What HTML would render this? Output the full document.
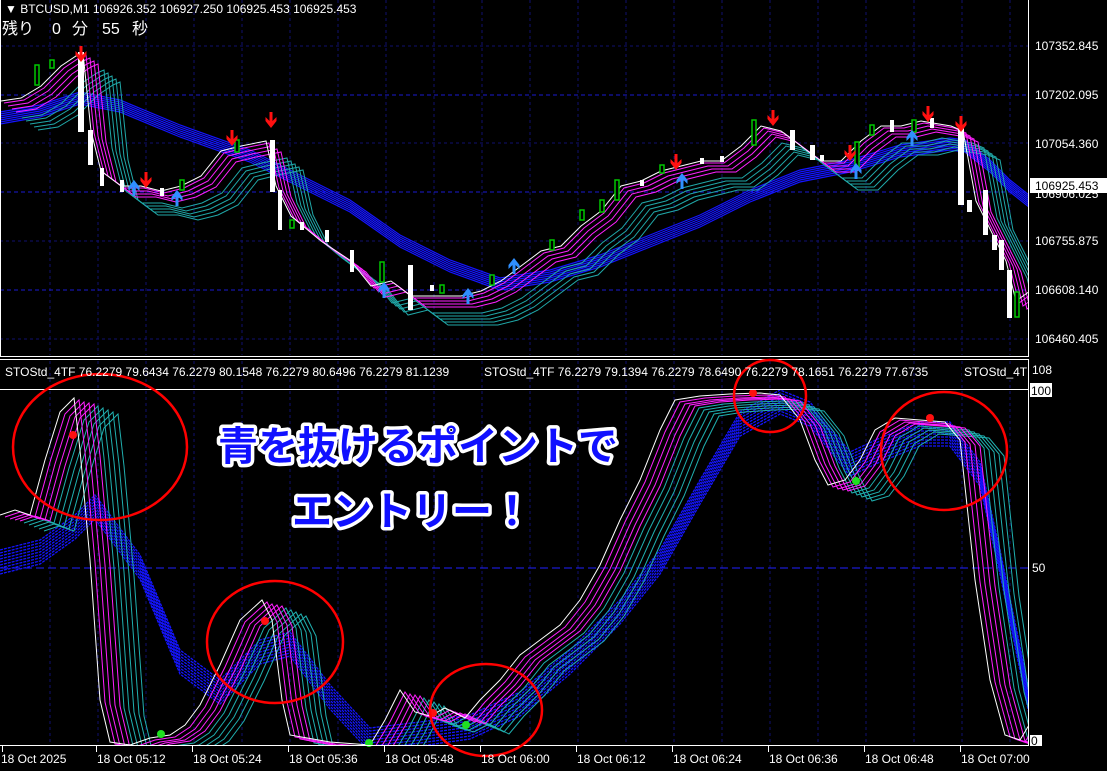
<!DOCTYPE html>
<html><head><meta charset="utf-8"><style>
html,body{margin:0;padding:0;background:#000;width:1107px;height:771px;overflow:hidden}
svg{display:block}
.t{font-family:"Liberation Sans",sans-serif;font-size:12px;fill:#fff}
.j{font-family:"Liberation Sans","Noto Sans CJK JP",sans-serif}
</style></head><body>
<svg width="1107" height="771" viewBox="0 0 1107 771" xmlns="http://www.w3.org/2000/svg">
<defs>
<path id="P" fill="none" d="M0,100 L20,97 L40,85 L60,65 L75,55 L82,52 L90,130 L100,170 L120,185 L140,185 L160,190 L180,185 L200,175 L220,150 L240,145 L265,140 L275,185 L290,215 L320,240 L350,260 L370,285 L390,280 L410,295 L430,295 L460,295 L480,290 L500,280 L520,265 L540,250 L560,245 L580,225 L600,210 L620,185 L640,180 L660,170 L680,165 L700,160 L720,160 L740,145 L760,125 L780,130 L800,145 L820,160 L840,160 L860,140 L880,125 L900,125 L920,120 L950,125 L962,130 L975,200 L990,230 L1005,260 L1015,300 L1029,290"/>
<path id="B" fill="none" d="M0,112 L40,105 L80,92 L120,100 L180,125 L250,150 L300,175 L350,200 L400,235 L450,260 L500,278 L550,270 L600,255 L650,235 L700,215 L750,190 L800,170 L850,160 L900,145 L950,138 L965,140 L990,160 L1010,180 L1029,195"/>
<path id="S" fill="none" d="M0,515 L15,510 L30,515 L45,460 L60,412 L74,398 L80,450 L90,560 L100,700 L110,742 L130,745 L150,738 L170,735 L185,725 L200,705 L220,665 L240,620 L262,600 L272,620 L282,700 L290,735 L330,742 L370,745 L385,720 L400,690 L415,712 L430,716 L445,708 L465,718 L480,700 L500,680 L520,655 L540,640 L560,625 L580,600 L600,565 L620,520 L640,480 L660,430 L675,400 L700,396 L730,394 L760,393 L780,395 L800,420 L815,460 L828,485 L845,480 L860,460 L875,430 L895,418 L920,420 L945,422 L960,440 L975,580 L990,680 L1005,735 L1020,740 L1029,725"/>
<path id="BL" fill="none" d="M0,550 L40,540 L75,515 L95,495 L140,555 L180,650 L220,680 L260,640 L290,632 L330,685 L370,728 L420,722 L470,715 L520,692 L570,650 L620,600 L660,550 L700,480 L740,412 L780,390 L810,402 L850,452 L880,438 L920,422 L950,422 L980,462 L1000,550 L1029,690"/>
<path id="AD" d="M-1.5,-8 h3 v9 l4,-4 v4 l-5.5,7 l-5.5,-7 v-4 l4,4 z" fill="#ff1010"/>
<path id="AU" d="M-1.5,8 h3 v-9 l4,4 v-4 l-5.5,-7 l-5.5,7 v4 l4,-4 z" fill="#2f8fff"/>
<clipPath id="c1"><rect x="0" y="0" width="1028" height="355"/></clipPath>
<clipPath id="c2"><rect x="0" y="390" width="1028" height="355"/></clipPath>
</defs>

<g stroke="#10106e" stroke-dasharray="3,3" stroke-width="1">
<path d="M50,0V355M98,0V355M146,0V355M194,0V355M242,0V355M290,0V355M338,0V355M386,0V355M434,0V355M482,0V355M530,0V355M578,0V355M626,0V355M674,0V355M722,0V355M770,0V355M818,0V355M866,0V355M914,0V355M962,0V355M1010,0V355"/>
<path d="M50,361V745M98,361V745M146,361V745M194,361V745M242,361V745M290,361V745M338,361V745M386,361V745M434,361V745M482,361V745M530,361V745M578,361V745M626,361V745M674,361V745M722,361V745M770,361V745M818,361V745M866,361V745M914,361V745M962,361V745M1010,361V745"/>
<path d="M0,46H1028M0,143H1028M0,241H1028M0,339H1028"/>
</g>
<g stroke="#1a1ad0" stroke-dasharray="4,3"><path d="M0,95H1028M0,192H1028M0,290H1028"/></g>
<path d="M0,568H1028" stroke="#2020ff" stroke-dasharray="8,4"/>

<g clip-path="url(#c1)">
<g stroke="#1414ff" stroke-width="1.2">
<use href="#B"/><use href="#B" transform="translate(0,2)"/><use href="#B" transform="translate(0,4)"/><use href="#B" transform="translate(0,6)"/><use href="#B" transform="translate(0,8)"/><use href="#B" transform="translate(0,10)"/><use href="#B" transform="translate(0,12)"/>
</g>
<g stroke="#20a8a8" stroke-width="1">
<use href="#P" transform="translate(22,18)"/><use href="#P" transform="translate(26,21)"/><use href="#P" transform="translate(30,24)"/><use href="#P" transform="translate(34,27)"/><use href="#P" transform="translate(38,30)"/>
</g>
<g stroke="#ff20ff" stroke-width="1">
<use href="#P" transform="translate(4,3)"/><use href="#P" transform="translate(8,6)"/><use href="#P" transform="translate(12,9)"/><use href="#P" transform="translate(16,12)"/>
</g>
<g stroke="#fff" stroke-width="1"><use href="#P" transform="translate(1,1)"/></g>
<g fill="#fff">
<rect x="78" y="52" width="6" height="80"/><rect x="88" y="130" width="5" height="35"/><rect x="270" y="140" width="5" height="52"/><rect x="278" y="190" width="4" height="40"/><rect x="408" y="265" width="5" height="45"/><rect x="325" y="230" width="4" height="12"/><rect x="350" y="250" width="4" height="22"/><rect x="790" y="130" width="5" height="20"/><rect x="810" y="145" width="5" height="15"/><rect x="958" y="125" width="6" height="80"/><rect x="967" y="200" width="5" height="12"/><rect x="983" y="190" width="5" height="45"/><rect x="992" y="235" width="5" height="15"/><rect x="999" y="240" width="5" height="30"/><rect x="1007" y="270" width="5" height="48"/>
<rect x="100" y="168" width="4" height="18"/><rect x="120" y="180" width="4" height="12"/><rect x="160" y="188" width="4" height="8"/><rect x="300" y="222" width="4" height="8"/><rect x="430" y="285" width="4" height="6"/><rect x="640" y="180" width="4" height="6"/><rect x="700" y="158" width="4" height="6"/><rect x="720" y="156" width="4" height="6"/><rect x="820" y="155" width="4" height="6"/><rect x="890" y="120" width="4" height="12"/><rect x="930" y="118" width="4" height="10"/>
</g>
<g fill="#000" stroke="#00c800" stroke-width="1.5">
<rect x="35" y="65" width="4" height="20"/><rect x="50" y="60" width="4" height="8"/><rect x="235" y="140" width="4" height="12"/><rect x="380" y="262" width="4" height="20"/><rect x="600" y="200" width="4" height="12"/><rect x="615" y="180" width="4" height="20"/><rect x="752" y="120" width="4" height="25"/><rect x="855" y="142" width="4" height="25"/><rect x="912" y="120" width="4" height="12"/><rect x="1015" y="292" width="4" height="25"/><rect x="490" y="275" width="4" height="10"/><rect x="550" y="240" width="4" height="10"/>
<rect x="180" y="180" width="4" height="10"/><rect x="290" y="220" width="4" height="8"/><rect x="440" y="285" width="4" height="8"/><rect x="580" y="210" width="4" height="10"/><rect x="660" y="165" width="4" height="8"/><rect x="870" y="125" width="4" height="10"/>
</g>
<use href="#AD" x="81" y="54"/><use href="#AD" x="146" y="180"/><use href="#AD" x="232" y="138"/><use href="#AD" x="271" y="120"/><use href="#AD" x="676" y="162"/><use href="#AD" x="773" y="118"/><use href="#AD" x="850" y="153"/><use href="#AD" x="928" y="114"/><use href="#AD" x="961" y="124"/>
<use href="#AU" x="134" y="188"/><use href="#AU" x="177" y="198"/><use href="#AU" x="384" y="290"/><use href="#AU" x="468" y="296"/><use href="#AU" x="514" y="266"/><use href="#AU" x="682" y="181"/><use href="#AU" x="856" y="171"/><use href="#AU" x="912" y="138"/>
</g>

<g clip-path="url(#c2)">
<g stroke="#1414ff" stroke-width="1.3" stroke-dasharray="3,1">
<use href="#BL"/><use href="#BL" transform="translate(0,3)"/><use href="#BL" transform="translate(0,6)"/><use href="#BL" transform="translate(0,9)"/><use href="#BL" transform="translate(0,12)"/><use href="#BL" transform="translate(0,15)"/><use href="#BL" transform="translate(0,18)"/><use href="#BL" transform="translate(0,21)"/><use href="#BL" transform="translate(0,24)"/>
</g>
<g stroke="#20b0b0" stroke-width="1">
<use href="#S" transform="translate(24,8)"/><use href="#S" transform="translate(29,10)"/><use href="#S" transform="translate(34,12)"/><use href="#S" transform="translate(39,14)"/><use href="#S" transform="translate(44,16)"/>
</g>
<g stroke="#ff20ff" stroke-width="1">
<use href="#S" transform="translate(5,2)"/><use href="#S" transform="translate(10,4)"/><use href="#S" transform="translate(15,5)"/><use href="#S" transform="translate(20,6)"/>
</g>
<g stroke="#fff" stroke-width="1"><use href="#S"/></g>
</g>
<g fill="#ff1010"><circle cx="73" cy="435" r="4"/><circle cx="265" cy="621" r="4"/><circle cx="433" cy="713" r="4"/><circle cx="753" cy="393" r="4"/><circle cx="930" cy="418" r="4"/></g>
<g fill="#20e020"><circle cx="161" cy="734" r="4"/><circle cx="369" cy="743" r="4"/><circle cx="466" cy="725" r="4"/><circle cx="856" cy="481" r="4"/></g>

<g stroke="#fff" fill="none" stroke-width="1">
<path d="M0.5,0V356.5H1028.5V0"/>
<path d="M0,359.5H1028.5V746"/>
<path d="M0,389.5H1028"/>
<path d="M0,745.5H1028.5"/>
</g>
<g stroke="#fff"><path d="M96.5,746V752M192.5,746V752M288.5,746V752M384.5,746V752M480.5,746V752M576.5,746V752M672.5,746V752M768.5,746V752M864.5,746V752M960.5,746V752M2.5,746V752"/></g>

<g fill="none" stroke="#ff0000" stroke-width="2.5">
<ellipse cx="100" cy="447" rx="87" ry="73"/>
<ellipse cx="275" cy="642" rx="68" ry="61"/>
<ellipse cx="486" cy="710" rx="56" ry="46"/>
<ellipse cx="770" cy="396" rx="36" ry="36"/>
<ellipse cx="944" cy="451" rx="63" ry="59"/>
</g>

<g class="j" font-size="40" font-weight="bold" fill="#1010ff" stroke="#fff" stroke-width="7" paint-order="stroke" stroke-linejoin="round" text-anchor="middle">
<text x="418" y="460">青を抜けるポイントで</text>
<text x="412" y="525">エントリー！</text>
</g>

<text class="t" x="5" y="13">▼ BTCUSD,M1  106926.352 106927.250 106925.453 106925.453</text>
<g class="j" font-size="16" fill="#fff"><text x="2" y="34">残り</text><text x="52" y="34">0</text><text x="72" y="34">分</text><text x="102" y="34">55</text><text x="132" y="34">秒</text></g>
<text class="t" x="5" y="376">STOStd_4TF 76.2279 79.6434 76.2279 80.1548 76.2279 80.6496 76.2279 81.1239</text>
<text class="t" x="484" y="376">STOStd_4TF 76.2279 79.1394 76.2279 78.6490 76.2279 78.1651 76.2279 77.6735</text>
<rect x="962" y="364" width="66" height="16" fill="#000"/>
<text class="t" x="964" y="376">STOStd_4T</text>

<g class="t">
<text x="1035" y="50">107352.845</text>
<text x="1035" y="99">107202.095</text>
<text x="1035" y="148">107054.360</text>
<text x="1035" y="198">106906.025</text>
<text x="1035" y="245">106755.875</text>
<text x="1035" y="294">106608.140</text>
<text x="1035" y="343">106460.405</text>
<text x="1032" y="374">108</text>
<text x="1032" y="572">50</text>
</g>
<rect x="1030" y="178" width="77" height="15" fill="#fff"/>
<text class="t" x="1035" y="190" style="fill:#000">106925.453</text>
<rect x="1030" y="383" width="22" height="14" fill="#fff"/>
<text class="t" x="1031" y="395" style="fill:#000">100</text>
<rect x="1030" y="735" width="12" height="11" fill="#fff"/>
<text class="t" x="1031" y="745" style="fill:#000">0</text>

<g class="t">
<text x="1" y="763">18 Oct 2025</text>
<text x="97" y="763">18 Oct 05:12</text>
<text x="193" y="763">18 Oct 05:24</text>
<text x="289" y="763">18 Oct 05:36</text>
<text x="385" y="763">18 Oct 05:48</text>
<text x="481" y="763">18 Oct 06:00</text>
<text x="577" y="763">18 Oct 06:12</text>
<text x="673" y="763">18 Oct 06:24</text>
<text x="769" y="763">18 Oct 06:36</text>
<text x="865" y="763">18 Oct 06:48</text>
<text x="961" y="763">18 Oct 07:00</text>
</g>
</svg>
</body></html>
